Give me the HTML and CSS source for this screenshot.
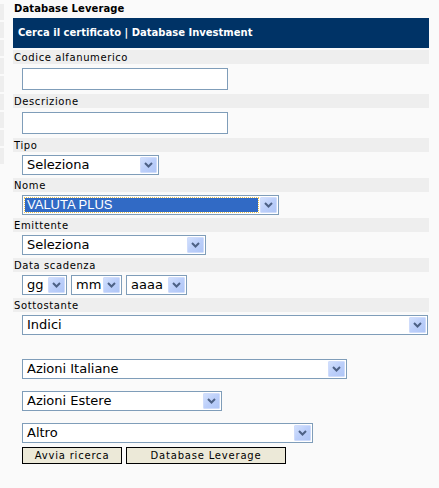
FILE: index.html
```html
<!DOCTYPE html>
<html lang="it">
<head>
<meta charset="utf-8">
<title>Database Leverage</title>
<link rel="stylesheet" href="styles.css">
</head>
<body>
<div class="layout">
  <div class="edge">
    <i></i><i></i><i></i><i></i><i></i><i></i><i></i><i></i><i></i>
  </div>
  <div class="main">
    <div class="title">Database Leverage</div>
    <div class="band">Cerca il certificato | Database Investment</div>

    <div class="label first">Codice alfanumerico</div>
    <div class="field-input"><div class="input"></div></div>

    <div class="label">Descrizione</div>
    <div class="field-input"><div class="input"></div></div>

    <div class="label">Tipo</div>
    <div class="field"><div class="select w-tipo"><span class="val">Seleziona</span><span class="btn"><svg width="9" height="6" viewBox="0 0 9 6"><path d="M1 1 L4.5 4.5 L8 1" fill="none" stroke="#4d6185" stroke-width="2"/></svg></span></div></div>

    <div class="label">Nome</div>
    <div class="field"><div class="select w-nome"><span class="val sel">VALUTA PLUS</span><span class="btn"><svg width="9" height="6" viewBox="0 0 9 6"><path d="M1 1 L4.5 4.5 L8 1" fill="none" stroke="#4d6185" stroke-width="2"/></svg></span></div></div>

    <div class="label">Emittente</div>
    <div class="field"><div class="select w-emit"><span class="val">Seleziona</span><span class="btn"><svg width="9" height="6" viewBox="0 0 9 6"><path d="M1 1 L4.5 4.5 L8 1" fill="none" stroke="#4d6185" stroke-width="2"/></svg></span></div></div>

    <div class="label">Data scadenza</div>
    <div class="field dates">
      <div class="select w-gg"><span class="val">gg</span><span class="btn"><svg width="9" height="6" viewBox="0 0 9 6"><path d="M1 1 L4.5 4.5 L8 1" fill="none" stroke="#4d6185" stroke-width="2"/></svg></span></div>
      <div class="select w-mm"><span class="val">mm</span><span class="btn"><svg width="9" height="6" viewBox="0 0 9 6"><path d="M1 1 L4.5 4.5 L8 1" fill="none" stroke="#4d6185" stroke-width="2"/></svg></span></div>
      <div class="select w-aaaa"><span class="val">aaaa</span><span class="btn"><svg width="9" height="6" viewBox="0 0 9 6"><path d="M1 1 L4.5 4.5 L8 1" fill="none" stroke="#4d6185" stroke-width="2"/></svg></span></div>
    </div>

    <div class="label">Sottostante</div>
    <div class="field"><div class="select w-sott"><span class="val">Indici</span><span class="btn"><svg width="9" height="6" viewBox="0 0 9 6"><path d="M1 1 L4.5 4.5 L8 1" fill="none" stroke="#4d6185" stroke-width="2"/></svg></span></div></div>

    <div class="extra">
      <div class="select w-ita"><span class="val">Azioni Italiane</span><span class="btn"><svg width="9" height="6" viewBox="0 0 9 6"><path d="M1 1 L4.5 4.5 L8 1" fill="none" stroke="#4d6185" stroke-width="2"/></svg></span></div>
      <div class="select w-est"><span class="val">Azioni Estere</span><span class="btn"><svg width="9" height="6" viewBox="0 0 9 6"><path d="M1 1 L4.5 4.5 L8 1" fill="none" stroke="#4d6185" stroke-width="2"/></svg></span></div>
      <div class="select w-altro"><span class="val">Altro</span><span class="btn"><svg width="9" height="6" viewBox="0 0 9 6"><path d="M1 1 L4.5 4.5 L8 1" fill="none" stroke="#4d6185" stroke-width="2"/></svg></span></div>
    </div>

    <div class="buttons">
      <button class="b b-avvia">Avvia ricerca</button>
      <button class="b b-db">Database Leverage</button>
    </div>
  </div>
</div>
</body>
</html>
```

FILE: styles.css
```css
html, body {
  margin: 0;
  padding: 0;
  background: #fafafa;
}
body {
  font-family: "DejaVu Sans", Verdana, sans-serif;
  color: #000;
  width: 439px;
  height: 488px;
  overflow: hidden;
}
.layout {
  display: flex;
}
.edge {
  width: 4px;
  display: flex;
  flex-direction: column;
  gap: 2px;
  padding-top: 4px;
}
.edge i {
  display: block;
  height: 16px;
  background: #eeeeee;
}
.main {
  margin-left: 9px;
  width: 416px;
}
.title {
  height: 18px;
  line-height: 18px;
  font-size: 10px;
  font-weight: bold;
  letter-spacing: 0.1px;
  padding-left: 1px;
}
.band {
  height: 30px;
  line-height: 30px;
  background: #003366;
  color: #fff;
  font-size: 10px;
  font-weight: bold;
  letter-spacing: 0;
  padding-left: 5px;
}
.label {
  height: 14px;
  line-height: 15px;
  background: #eeeeee;
  font-size: 10px;
  letter-spacing: 0.6px;
  padding-left: 1px;
}
.label.first {
  margin-top: 2px;
}
.field-input {
  height: 30px;
  padding: 4px 0 0 9px;
  box-sizing: border-box;
}
.input {
  width: 206px;
  height: 22px;
  box-sizing: border-box;
  border: 1px solid #7f9db9;
  background: #fff;
}
.field {
  height: 26px;
  padding: 3px 0 0 9px;
  box-sizing: border-box;
}
.dates {
  display: flex;
  gap: 4px;
}
.select {
  height: 20px;
  box-sizing: border-box;
  border: 1px solid #7f9db9;
  background: #fff;
  display: flex;
  align-items: center;
  padding: 1px;
  font-size: 13px;
}
.val {
  flex: 1;
  padding-left: 3px;
  line-height: 18px;
  white-space: nowrap;
  overflow: hidden;
}
.val.sel {
  background: #316ac5;
  color: #fff;
  margin: 1px 2px 1px 1px;
  line-height: 14px;
  padding-left: 2px;
  outline: 1px dotted #e8c050;
  font-family: "Liberation Sans", Arial, sans-serif;
  font-size: 13px;
}
.btn {
  width: 17px;
  height: 16px;
  box-sizing: border-box;
  border: 1px solid #cfdcfb;
  border-radius: 1px;
  background: linear-gradient(135deg, #d2e0fd 0%, #bccffa 50%, #b0c6f6 100%);
  display: flex;
  align-items: center;
  justify-content: center;
}
.w-tipo { width: 137px; }
.w-nome { width: 257px; }
.w-emit { width: 184px; }
.w-gg { width: 45px; }
.w-mm { width: 51px; }
.w-aaaa { width: 61px; }
.w-sott { width: 406px; }
.w-ita { width: 325px; }
.w-est { width: 200px; }
.w-altro { width: 291px; }
.extra {
  padding: 21px 0 0 9px;
  display: flex;
  flex-direction: column;
  gap: 12px;
}
.buttons {
  display: flex;
  gap: 4px;
  padding: 4px 0 0 9px;
}
.b {
  height: 17px;
  box-sizing: border-box;
  border: 1px solid #000;
  background: #ece9d8;
  font-family: "DejaVu Sans", Verdana, sans-serif;
  font-size: 10px;
  letter-spacing: 0.8px;
  padding: 0;
  color: #000;
  line-height: 15px;
}
.b-avvia { width: 100px; }
.b-db { width: 160px; }
```
